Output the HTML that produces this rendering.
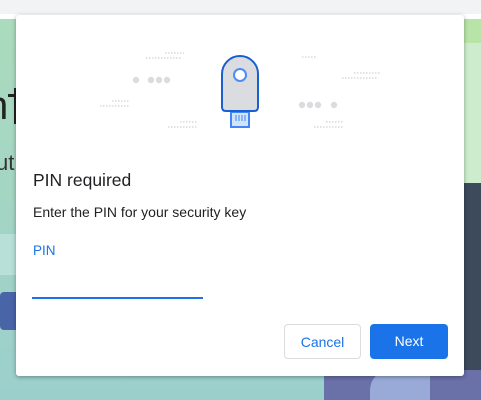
<!DOCTYPE html>
<html><head><style>
body{margin:0;width:481px;height:400px;overflow:hidden;position:relative;font-family:"Liberation Sans",sans-serif;background:linear-gradient(180deg,#acdcbc 0%,#a2d4c6 60%,#9acfcc 100%);}
.abs{position:absolute}
.dlg{left:16px;top:15px;width:448px;height:361px;background:#fff;border-radius:3px;box-shadow:0 1px 4px rgba(0,0,0,.35)}
.t{position:absolute;color:#202124}
.btn{position:absolute;top:309px;height:35px;border-radius:4px;font-size:14px;text-align:center;line-height:35px;box-sizing:border-box}
</style></head><body>
<div class="abs" style="left:0;top:0;width:481px;height:14px;background:#f1f3f4"></div>
<div class="abs" style="left:0;top:14px;width:481px;height:5px;background:#fff"></div>
<div class="abs" style="left:440px;top:19px;width:41px;height:24px;background:#b8e4a8"></div>
<div class="abs" style="left:440px;top:43px;width:41px;height:140px;background:#cdecce"></div>
<div class="abs" style="left:440px;top:183px;width:41px;height:217px;background:#3c4a5c"></div>
<div class="abs" style="left:0;top:234px;width:20px;height:41px;background:#b8e0d8"></div>
<div class="abs" style="left:0;top:292px;width:20px;height:38px;background:#4a64a8;border-radius:4px"></div>
<div class="abs" style="left:324px;top:370px;width:157px;height:30px;background:#6a70a8"></div>
<div class="abs" style="left:370px;top:370px;width:60px;height:30px;background:#9aaad8;border-radius:20px 0 0 0"></div>
<div class="abs" style="left:-14px;top:84px;font-size:40px;color:#222">n</div>
<div class="abs" style="left:14px;top:88px;width:3px;height:36px;background:#222"></div>
<div class="abs" style="left:8px;top:94px;width:9px;height:3px;background:#222"></div>
<div class="abs" style="left:-4px;top:150px;font-size:22px;color:#333">ut</div>
<div class="abs dlg">
<svg class="abs" style="left:0;top:0" width="448" height="130">
<g fill="#dadce0">
<circle cx="120" cy="65" r="3.2"/><circle cx="135" cy="65" r="3.2"/><circle cx="143" cy="65" r="3.2"/><circle cx="151" cy="65" r="3.2"/>
<circle cx="286" cy="90" r="3.2"/><circle cx="294" cy="90" r="3.2"/><circle cx="302" cy="90" r="3.2"/><circle cx="318" cy="90" r="3.2"/>
</g>
<g stroke="#d0d2d6" stroke-width="1.2" stroke-dasharray="1.5 1.5">
<line x1="130" y1="43" x2="166" y2="43"/><line x1="149" y1="38" x2="168" y2="38"/>
<line x1="84" y1="91" x2="114" y2="91"/><line x1="96" y1="86" x2="114" y2="86"/>
<line x1="152" y1="112" x2="182" y2="112"/><line x1="164" y1="107" x2="182" y2="107"/>
<line x1="286" y1="42" x2="300" y2="42"/>
<line x1="326" y1="63" x2="362" y2="63"/><line x1="338" y1="58" x2="364" y2="58"/>
<line x1="298" y1="112" x2="328" y2="112"/><line x1="310" y1="107" x2="328" y2="107"/>
</g>
<rect x="215" y="97" width="18" height="15" fill="#d2e3fc" stroke="#4285f4" stroke-width="2"/>
<g stroke="#4285f4" stroke-width="1"><line x1="220" y1="100" x2="220" y2="106"/><line x1="223" y1="100" x2="223" y2="106"/><line x1="226" y1="100" x2="226" y2="106"/><line x1="229" y1="100" x2="229" y2="106"/></g>
<path d="M206,59 A18,18 0 0 1 242,59 L242,92 Q242,96 238,96 L210,96 Q206,96 206,92 Z" fill="#dadce0" stroke="#1a5fd0" stroke-width="2"/>
<circle cx="224" cy="60" r="6" fill="#fff" stroke="#4d8bf5" stroke-width="2"/>
</svg>
<div class="t" style="left:17px;top:155px;font-size:17.5px">PIN required</div>
<div class="t" style="left:17px;top:189px;font-size:14px">Enter the PIN for your security key</div>
<div class="t" style="left:17px;top:228px;font-size:13.5px;color:#1a73e8">PIN</div>
<div class="abs" style="left:16px;top:282px;width:171px;height:2px;background:#1a73e8"></div>
<div class="btn" style="left:268px;width:77px;border:1px solid #dadce0;color:#1a73e8;background:#fff">Cancel</div>
<div class="btn" style="left:354px;width:78px;background:#1a73e8;color:#fff">Next</div>
</div>
</body></html>
